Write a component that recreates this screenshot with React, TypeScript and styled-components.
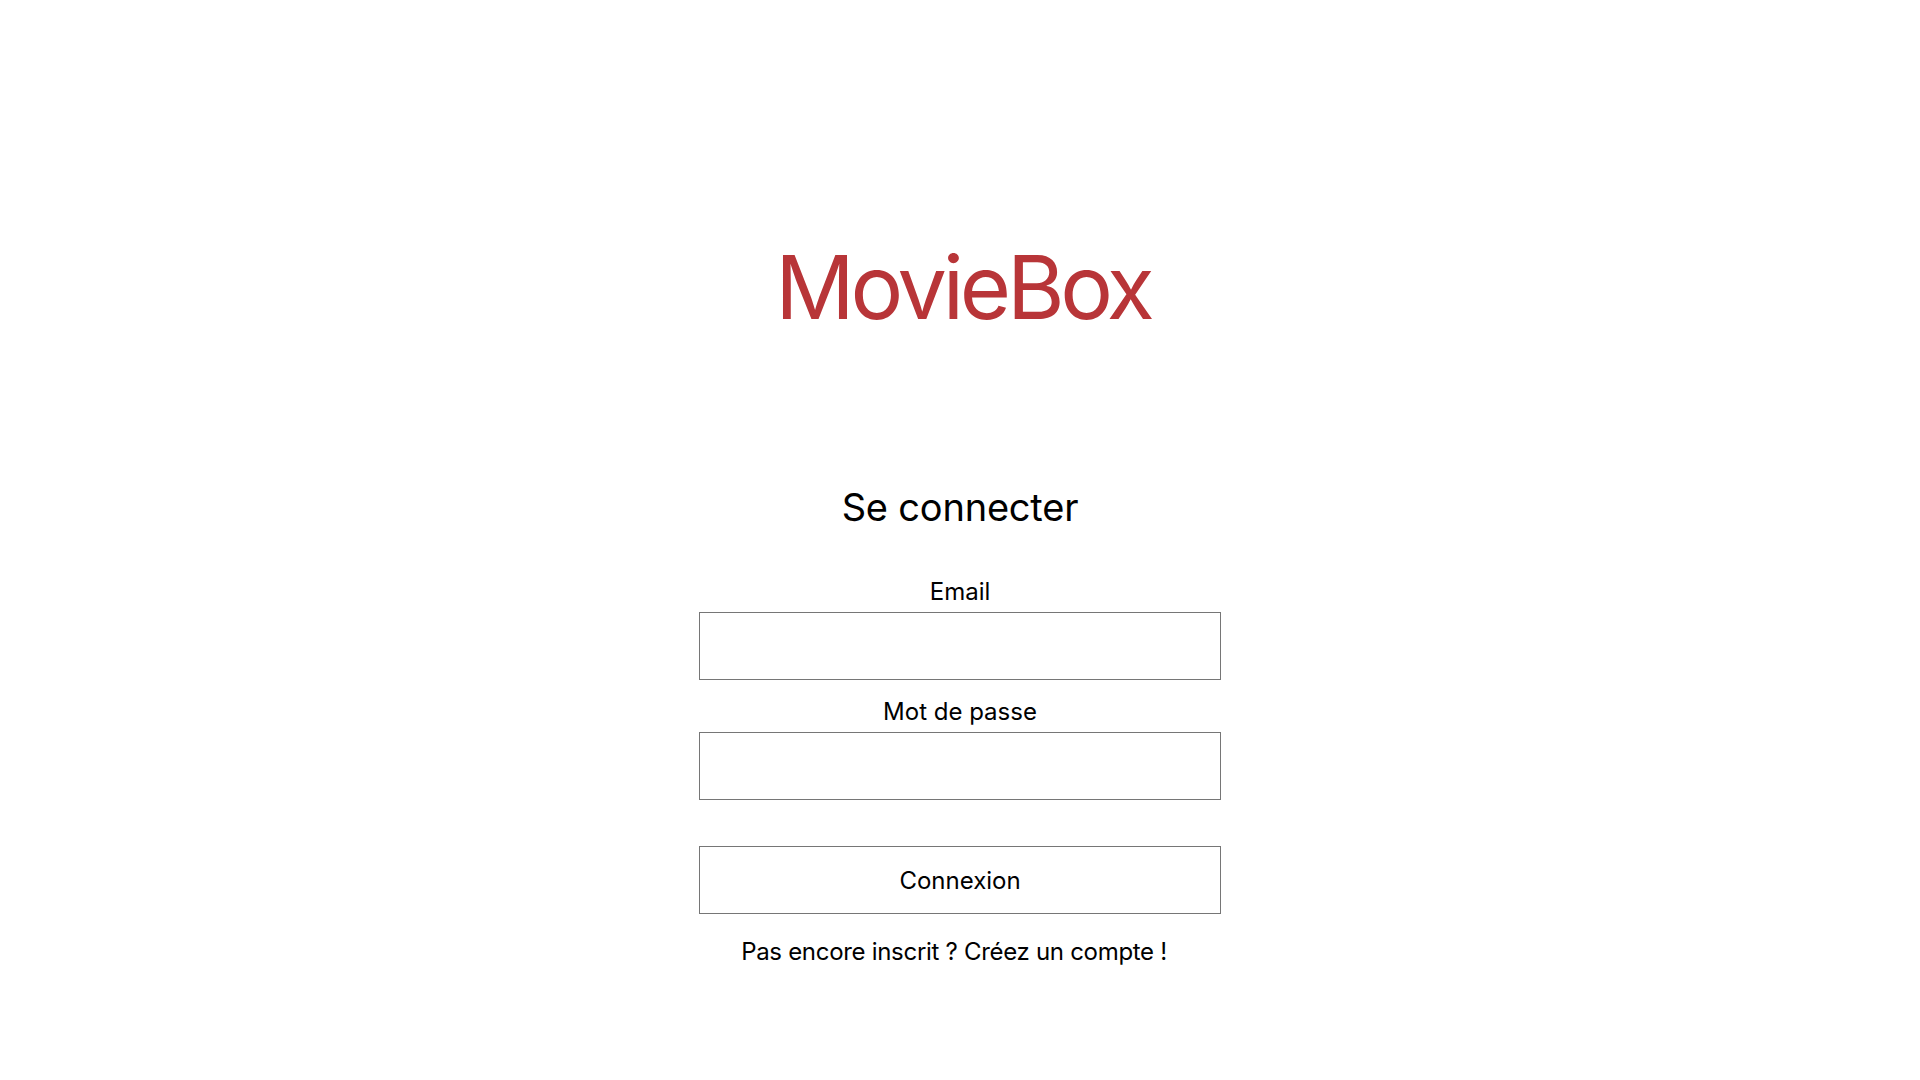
import React from "react";
import styled, { createGlobalStyle } from "styled-components";

const GlobalStyle = createGlobalStyle`
  html, body {
    margin: 0;
    padding: 0;
    background: #ffffff;
  }
  body {
    font-family: Inter, "Noto Sans", "Liberation Sans", sans-serif;
    color: #000000;
  }
  * { box-sizing: border-box; }
`;

const Page = styled.main`
  display: flex;
  flex-direction: column;
  align-items: center;
  min-height: 1080px;
  padding-top: 234px;
`;

const Logo = styled.h1`
  margin: 0 0 0 6px;
  font-size: 88px;
  font-weight: 400;
  line-height: 106px;
  color: #b83538;
  letter-spacing: -4.2px;
`;

const Form = styled.form`
  display: flex;
  flex-direction: column;
  align-items: center;
  margin-top: 144px;
  width: 522px;
`;

const Heading = styled.h2`
  margin: 0 0 47px;
  font-size: 38px;
  font-weight: 400;
  line-height: 46px;
  letter-spacing: -0.2px;
`;

const Field = styled.div`
  display: flex;
  flex-direction: column;
  align-items: center;
  width: 100%;
  gap: 6px;
  & + & {
    margin-top: 17px;
  }
`;

const Label = styled.label`
  font-size: 24px;
  line-height: 29px;
`;

const Input = styled.input`
  width: 100%;
  height: 68px;
  border: 1px solid #767676;
  background: #ffffff;
  padding: 0 12px;
  font-size: 20px;
  font-family: inherit;
  outline: none;
`;

const Button = styled.button`
  margin-top: 46px;
  width: 100%;
  height: 68px;
  border: 1px solid #767676;
  background: #ffffff;
  font-family: inherit;
  font-size: 24px;
  color: #000000;
  cursor: pointer;
`;

const SignupText = styled.p`
  margin: 23px 0 0;
  font-size: 24px;
  line-height: 30px;
  letter-spacing: -0.3px;
  padding-right: 12px;
`;

export default function App() {
  return (
    <>
      <GlobalStyle />
      <Page>
        <Logo>MovieBox</Logo>
        <Form onSubmit={(e) => e.preventDefault()}>
          <Heading>Se connecter</Heading>
          <Field>
            <Label htmlFor="email">Email</Label>
            <Input id="email" type="email" />
          </Field>
          <Field>
            <Label htmlFor="password">Mot de passe</Label>
            <Input id="password" type="password" />
          </Field>
          <Button type="submit">Connexion</Button>
          <SignupText>Pas encore inscrit ? Créez un compte !</SignupText>
        </Form>
      </Page>
    </>
  );
}
